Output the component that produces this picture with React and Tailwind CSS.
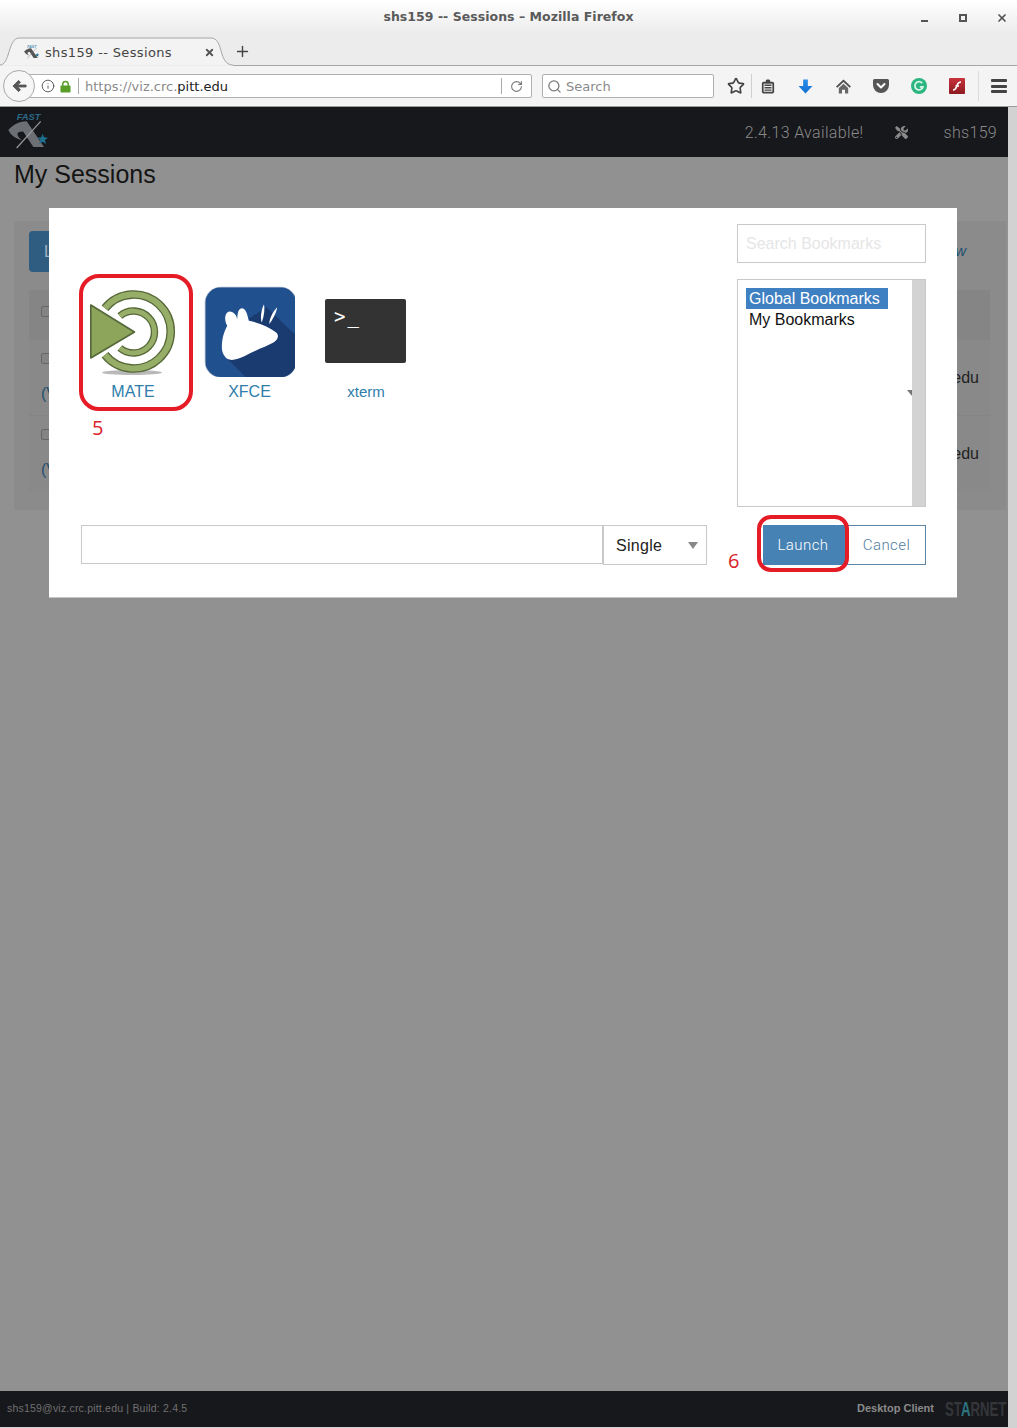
import { Info, Plus, RotateCw, Search, Star, X } from 'lucide-react'
import { FaTools } from 'react-icons/fa'

const dejavu = "font-['DejaVu_Sans',sans-serif]"
const liberation = "font-['Liberation_Sans',sans-serif]"
const roboto = "font-[Roboto,sans-serif]"

// coordinates are the logo's place on the nav bar x3
const FastLogo = ({ className, text = '#2b6a86', body = '#6c7074', line = '#9a9a9a' }) => (
  <svg viewBox="24 330 126 120" className={className}>
    <text x="50" y="360" fontFamily="Liberation Sans" fontSize="28" fontWeight="700" fontStyle="italic" fill={text}>FAST</text>
    <path d="M25 390 C40 375 55 365 80 364 L132 441 L100 441 L70 395 C50 393 45 405 66 421 C45 415 32 405 25 390Z" fill={body} />
    <path d="M122 364 L50 444" stroke={line} strokeWidth="3.5" />
    <path d="M128 401 l4 11 12 1 -9 7 3 12 -10 -7 -10 7 3 -12 -9 -7 12 -1z" fill="#1f6f8e" />
  </svg>
)

function WindowTitle() {
  return (
    <div className="grid h-[37px] grid-cols-[1fr_auto_1fr] items-center pb-[2px]">
      <div />
      <span className={`${dejavu} text-[12.5px] font-bold tracking-[0.03px] text-[#5a5a5a]`}>shs159 -- Sessions – Mozilla Firefox</span>
      <div className="flex items-center justify-end pr-[9px]">
        <div className="mt-[6px] h-[2px] w-[7px] bg-[#555]" />
        <div className="ml-[31px] h-[8px] w-[8px] border-2 border-[#555]" />
        <X size={12} strokeWidth={3.5} className="ml-[29px] text-[#555]" />
      </div>
    </div>
  )
}

function TabStrip() {
  return (
    <div className="flex h-[29px]">
      <div className="relative h-full w-[233px] shrink-0">
        <svg viewBox="0 0 233 29" className="absolute inset-0 h-full w-full">
          <path d="M0 28 C10 28 8 1 19 1 L211 1 C224 1 218 28 233 28 Z" fill="#f3f3f3" />
          <path d="M0 28 C10 28 8 1 19 1 L211 1 C224 1 218 28 233 28" fill="none" stroke="#a6a6a6" />
        </svg>
        <div className="relative flex h-full items-center pl-[24px] pt-[3px]">
          <FastLogo className="-mt-[3px] h-[17px] w-[16px]" text="#4d8fb0" body="#555" line="#777" />
          <span className={`${dejavu} ml-[5px] text-[13px] tracking-[0.35px] text-[#444]`}>shs159 -- Sessions</span>
          <X size={11} strokeWidth={4} className="ml-[32px] -mt-[2px] text-[#555]" />
        </div>
      </div>
      <div className="flex-1 border-b border-[#a6a6a6] pl-[1px]">
        <Plus size={17} strokeWidth={2} className="mt-[6px] text-[#444]" />
      </div>
    </div>
  )
}

const ToolIcon = ({ className, children }) => (
  <div className={`flex h-full shrink-0 items-center justify-center ${className}`}>{children}</div>
)

function NavBar() {
  return (
    <div className="flex h-[41px] items-center border-b border-[#9c9c9c] bg-[#f4f4f4] pl-[3px]">
      <div className="z-10 flex h-[32px] w-[32px] shrink-0 items-center justify-center rounded-full border border-[#a9a9a9] bg-[#f6f6f6]">
        <svg viewBox="0 0 16 14" className="h-[14px] w-[15px]">
          <path d="M7 1 L1 7 L7 13 L9 11 L6 8 L15 8 L15 6 L6 6 L9 3Z" fill="#555" stroke="#555" strokeLinejoin="round" />
        </svg>
      </div>
      <div className="-ml-[16px] flex h-[24px] w-[513px] shrink-0 items-center rounded-r-[2px] border border-[#b0b0b0] bg-white">
        <Info size={14} strokeWidth={1.6} className="ml-[21px] text-[#555]" />
        <svg viewBox="0 0 12 13" className="ml-[5px] h-[13px] w-[11px]">
          <path d="M3 6 V4 a3 3 0 0 1 6 0 V6" fill="none" stroke="#5a9e2a" strokeWidth="1.6" />
          <rect x="0.5" y="5.5" width="11" height="7.5" rx="1" fill="#5a9e2a" />
        </svg>
        <div className="ml-[7px] h-[16px] w-px bg-[#aaa]" />
        <span className={`${dejavu} ml-[6px] pt-[1px] text-[13px] text-[#8a8a8a]`}>
          https://viz.crc.<span className="text-[#222]">pitt.edu</span>
        </span>
        <div className="ml-auto flex h-full items-center">
          <div className="h-[16px] w-px bg-[#aaa]" />
          <RotateCw size={13} strokeWidth={2} className="mx-[8px] text-[#777]" />
        </div>
      </div>
      <div className="ml-[10px] flex h-[24px] w-[172px] shrink-0 items-center rounded-[2px] border border-[#b0b0b0] bg-white pl-[4px]">
        <Search size={15} strokeWidth={2} className="text-[#777]" />
        <span className={`${dejavu} ml-[4px] pt-[1px] text-[13px] text-[#8a8a8a]`}>Search</span>
      </div>
      <ToolIcon className="ml-[12px] w-[20px]">
        <Star size={18} strokeWidth={2.2} className="text-[#444]" />
      </ToolIcon>
      <div className="ml-[5px] h-[24px] w-px shrink-0 bg-[#d0d0d0]" />
      <ToolIcon className="w-[31px]">
        <svg viewBox="0 0 16 16" className="h-[15px] w-[14px]">
          <path d="M5.5 2.5 V1.5 C5.5 0.5 6.5 0 8 0 C9.5 0 10.5 0.5 10.5 1.5 V2.5 H13 A2 2 0 0 1 15 4.5 V14 A2 2 0 0 1 13 16 H3 A2 2 0 0 1 1 14 V4.5 A2 2 0 0 1 3 2.5Z" fill="#444" />
          <rect x="3" y="4.8" width="10" height="9.2" fill="#f4f4f4" />
          <path d="M4 6.6h8M4 9.4h8M4 12.2h8" stroke="#444" strokeWidth="1.5" />
        </svg>
      </ToolIcon>
      <ToolIcon className="ml-[3px] w-[38px]">
        <svg viewBox="0 0 16 15" className="h-[15px] w-[15px]">
          <defs>
            <linearGradient id="dl-blue" x1="0" y1="0" x2="0" y2="1">
              <stop offset="0" stopColor="#2a90ea" />
              <stop offset="1" stopColor="#0f6fd0" />
            </linearGradient>
          </defs>
          <path d="M5.5 0 H10.5 V7 H15.5 L8 15 L0.5 7 H5.5Z" fill="url(#dl-blue)" />
        </svg>
      </ToolIcon>
      <ToolIcon className="w-[38px]">
        <svg viewBox="0 0 16 15" className="h-[15px] w-[15px]">
          <path d="M8 0 L16 7.6 L14.6 8.8 L8 2.8 L1.4 8.8 L0 7.6Z" fill="#4f4f4f" />
          <path d="M3 9 L8 4.6 L13 9 V15 H9.6 V11 H6.4 V15 H3Z" fill="#666" />
        </svg>
      </ToolIcon>
      <ToolIcon className="w-[38px]">
        <svg viewBox="0 0 16 14" className="h-[14px] w-[16px]">
          <path d="M1.5 0 H14.5 A1.5 1.5 0 0 1 16 1.5 V6 A8 8 0 0 1 0 6 V1.5 A1.5 1.5 0 0 1 1.5 0Z" fill="#555" />
          <path d="M4.5 5 L8 8.5 L11.5 5" fill="none" stroke="#fff" strokeWidth="2" strokeLinecap="round" strokeLinejoin="round" />
        </svg>
      </ToolIcon>
      <ToolIcon className="w-[38px]">
        <svg viewBox="0 0 16 16" className="h-[16px] w-[16px]">
          <circle cx="8" cy="8" r="8" fill="#2bb67f" />
          <path d="M11.2 5.2 A4.1 4.1 0 1 0 12 8.8 H8.8" fill="none" stroke="#d8f3e8" strokeWidth="1.8" />
        </svg>
      </ToolIcon>
      <ToolIcon className="w-[38px]">
        <svg viewBox="0 0 16 16" className="h-[16px] w-[16px]">
          <defs>
            <linearGradient id="flash-red" x1="0" y1="0" x2="0" y2="1">
              <stop offset="0" stopColor="#c9333b" />
              <stop offset="1" stopColor="#8e1a20" />
            </linearGradient>
          </defs>
          <rect width="16" height="16" rx="1" fill="url(#flash-red)" />
          <path d="M4 12 C7 12 7 10 8 7.5 C8.6 5.5 9.5 4 12 4 M6.5 8 H10" fill="none" stroke="#fff" strokeWidth="1.6" />
        </svg>
      </ToolIcon>
      <div className="ml-[2px] h-[30px] w-px shrink-0 bg-[#dcdcdc]" />
      <ToolIcon className="ml-[1px] w-[38px]">
        <div className="flex w-[16px] flex-col gap-[2.5px]">
          <div className="h-[3px] rounded-[1px] bg-[#444]" />
          <div className="h-[3px] rounded-[1px] bg-[#444]" />
          <div className="h-[3px] rounded-[1px] bg-[#444]" />
        </div>
      </ToolIcon>
    </div>
  )
}

const MateIcon = () => (
  <svg viewBox="88 286 90 90" className="h-[90px] w-[90px]">
    <ellipse cx="132" cy="372.5" rx="30" ry="2.5" fill="#b9b9b9" />
    {[
      { d: 'M105 308.2 A37 37 0 1 1 105 354.8', w: 8.6 },
      { d: 'M119.9 316 A21 21 0 1 1 119.9 348', w: 7.4 },
    ].map(({ d, w }) => (
      <g key={d} fill="none">
        <path d={d} stroke="#566838" strokeWidth={w} />
        <path d={d} stroke="#97ae68" strokeWidth={w - 2.6} />
      </g>
    ))}
    <path d="M90.8 305 L90.8 358 L134.5 332Z" fill="#8ca55b" stroke="#55683a" strokeWidth="1.6" strokeLinejoin="round" />
  </svg>
)

const XfceIcon = () => (
  <svg viewBox="29 32 270 270" className="-ml-[1px] h-[91px] w-[91px]">
    <defs>
      <clipPath id="xfce-square">
        <rect x="33" y="36" width="269" height="266" rx="46" />
      </clipPath>
    </defs>
    <rect x="31" y="34" width="273" height="270" rx="48" fill="#aab8cc" />
    <g clipPath="url(#xfce-square)">
      <rect x="33" y="36" width="269" height="266" fill="#21508f" />
      <path d="M90 240 L190 340 L340 340 L340 215 L215 95 L160 130 L243 170Z" fill="#1a3b70" />
    </g>
    <path
      d="M82 215 C82 185 90 165 98 150 C88 135 90 110 105 108 C118 108 125 120 128 130 C128 110 132 98 142 98 C155 100 158 120 162 135 C190 140 225 155 243 170 C252 178 250 190 235 200 C215 212 185 220 150 240 C125 252 100 258 90 240 C85 232 82 225 82 215Z"
      fill="#fff"
    />
    <path d="M207 86 C210 105 206 125 200 140 C196 125 198 105 207 86Z" fill="#fff" />
    <path d="M246 95 C244 112 232 132 223 145 C222 130 232 110 246 95Z" fill="#fff" />
  </svg>
)

const XtermIcon = () => (
  <div className="-ml-[1px] flex h-[64px] w-[81px] items-start rounded-[2px] bg-[#333] pl-[9px] pt-[5px]">
    <span className="font-['DejaVu_Sans_Mono',monospace] text-[19px] leading-[24px] tracking-[2px] text-white">&gt;_</span>
  </div>
)

const desktops = [
  { name: 'MATE', icon: <MateIcon />, size: 'text-[16px]' },
  { name: 'XFCE', icon: <XfceIcon />, size: 'text-[16px]' },
  { name: 'xterm', icon: <XtermIcon />, size: 'text-[15px]' },
]

function Modal() {
  return (
    <div className="absolute left-[49px] top-[208px] h-[390px] w-[908px] border-b border-[#c4c4c4] bg-white pl-[32px] pr-[31px] pt-[16px]">
      <div className="flex justify-between">
        <div className="mt-[62px] flex gap-[12.5px]">
          {desktops.map((d) => (
            <div key={d.name} className="flex w-[104px] flex-col items-center">
              <div className="flex h-[90px] items-center">{d.icon}</div>
              <span className={`${liberation} ${d.size} mt-[5px] leading-[22px] text-[#2e7dab]`}>{d.name}</span>
            </div>
          ))}
        </div>
        <div className="w-[189px]">
          <div className={`${liberation} flex h-[39px] items-center border border-[#c9c9c9] pl-[8px] text-[16px] text-[#e6e6e6]`}>
            Search Bookmarks
          </div>
          <div className="relative mt-[16px] flex h-[228px] border border-[#c9c9c9]">
            <div className={`${liberation} flex-1 pl-[8px] pt-[8px] text-[16px] leading-[21px] text-[#111]`}>
              <div className="w-[142px] bg-[#3f80c2] pl-[3px] text-white">Global Bookmarks</div>
              <div className="pl-[3px]">My Bookmarks</div>
            </div>
            <div className="w-[13px] bg-[#d3d3d3]" />
            <div className="absolute right-[13px] top-[110px] h-0 w-0 border-l-[5px] border-t-[6px] border-l-transparent border-t-[#777]" />
          </div>
        </div>
      </div>
      <div className="mt-[18px] flex items-start justify-between">
        <div className="flex">
          <div className="h-[39px] w-[522px] border border-[#c9c9c9]" />
          <div className={`${liberation} flex h-[40px] w-[104px] items-center justify-between border border-[#c9c9c9] pl-[12px] pr-[8px] pt-[1px] text-[16px] tracking-[0.3px] text-[#222]`}>
            Single
            <div className="h-0 w-0 border-x-[5px] border-t-[7px] border-x-transparent border-t-[#888]" />
          </div>
        </div>
        <div className="flex">
          <div className={`${roboto} flex h-[40px] w-[85px] items-center justify-center bg-[#4682b4] pr-[5px] text-[15px] font-light tracking-[0.45px] text-white`}>Launch</div>
          <div className={`${roboto} flex h-[40px] w-[78px] items-center justify-center border border-l-0 border-[#5d86a6] text-[15px] font-light tracking-[0.45px] text-[#4f7d9f]`}>Cancel</div>
        </div>
      </div>
      <div className="absolute left-[30px] top-[66px] h-[137px] w-[114px] rounded-[20px] border-4 border-[#e51c26]" />
      <span className="absolute left-[43px] top-[206px] font-['Open_Sans',sans-serif] text-[20px] leading-[28px] text-[#d9222a]">5</span>
      <div className="absolute left-[708px] top-[307px] h-[57px] w-[92px] rounded-[14px] border-4 border-[#e51c26]" />
      <span className="absolute left-[679px] top-[339px] font-['Open_Sans',sans-serif] text-[20px] leading-[28px] text-[#d9222a]">6</span>
    </div>
  )
}

const SessionRow = () => (
  <div className="flex h-[76px] items-stretch justify-between border-t border-[#848484] pl-[12px] pr-[11px]">
    <div className="flex flex-col pt-[13px]">
      <div className="h-[11px] w-[11px] rounded-[2px] border border-[#666] bg-[#848484]" />
      <span className={`${liberation} mt-[18px] whitespace-nowrap text-[16px] text-[#23506f]`}>(VNC)</span>
    </div>
    <span className={`${liberation} pt-[26px] text-[16px] text-[#222]`}>viz.crc.pitt.edu</span>
  </div>
)

function SessionsPanel() {
  return (
    <div className="ml-[14px] h-[289px] w-[992px] bg-[#8b8b8b] pl-[15px] pr-[16px] pt-[10px]">
      <div className="flex items-center justify-between pr-[24px]">
        <div className={`${liberation} flex h-[41px] w-[80px] items-center rounded-[4px] bg-[#2f5c81] pl-[15px] text-[16px] text-[#9fb3c4]`}>Launch</div>
        <span className={`${liberation} text-[15px] italic text-[#23506f]`}>View</span>
      </div>
      <div className="mt-[18px] bg-[#898989]">
        <div className="flex h-[49px] bg-[#858585] pl-[12px] pt-[16px]">
          <div className="h-[11px] w-[11px] rounded-[2px] border border-[#666] bg-[#848484]" />
        </div>
        <SessionRow />
        <SessionRow />
      </div>
    </div>
  )
}

function App() {
  return (
    <div className="relative flex h-[1428px] w-[1017px] flex-col overflow-hidden bg-[#d2d2d2]">
      <div className="h-[66px] bg-gradient-to-b from-white from-0% to-[#ececec] to-50%">
        <WindowTitle />
        <TabStrip />
      </div>
      <NavBar />
      <div className="flex min-h-0 flex-1">
        <div className="flex w-[1008px] flex-col">
          <div className="flex h-[50px] items-center justify-between bg-[#17181c] pl-[8px] pr-[11px]">
            <FastLogo className="-mt-[5px] h-[40px] w-[42px]" />
            <div className={`${roboto} flex items-center pt-[1px] text-[16px] font-light tracking-[0.35px] text-[#8a8a8a]`}>
              <span>2.4.13 Available!</span>
              <FaTools size={13} className="ml-[31px] text-[#8a8a8a]" />
              <span className="ml-[36px] tracking-[0.3px]">shs159</span>
            </div>
          </div>
          <div className="flex-1 bg-[#919191]">
            <h1 className={`${liberation} mb-[29px] h-[35px] pl-[14px] text-[25px] leading-[35px] text-[#141414]`}>My Sessions</h1>
            <SessionsPanel />
          </div>
          <div className="flex h-[36px] items-center justify-between bg-[#17181c] pb-[1px] pl-[7px]">
            <span className={`${liberation} text-[10.5px] tracking-[0.2px] text-[#6f6f6f]`}>shs159@viz.crc.pitt.edu | Build: 2.4.5</span>
            <div className="flex items-center">
              <span className={`${liberation} text-[11px] font-bold text-[#8a8a8a]`}>Desktop Client</span>
              <div className={`${liberation} ml-[11px] w-[63px] origin-left scale-x-[0.66] whitespace-nowrap text-[20px] font-bold leading-[22px] text-[#35363a]`}>
                ST<span className="text-[#2c7480]">A</span>RNET
              </div>
            </div>
          </div>
          <div className="h-px bg-[#d2d2d2]" />
        </div>
        <div className="w-[9px] bg-[#d2d2d2]" />
      </div>
      <Modal />
    </div>
  )
}

export default App
